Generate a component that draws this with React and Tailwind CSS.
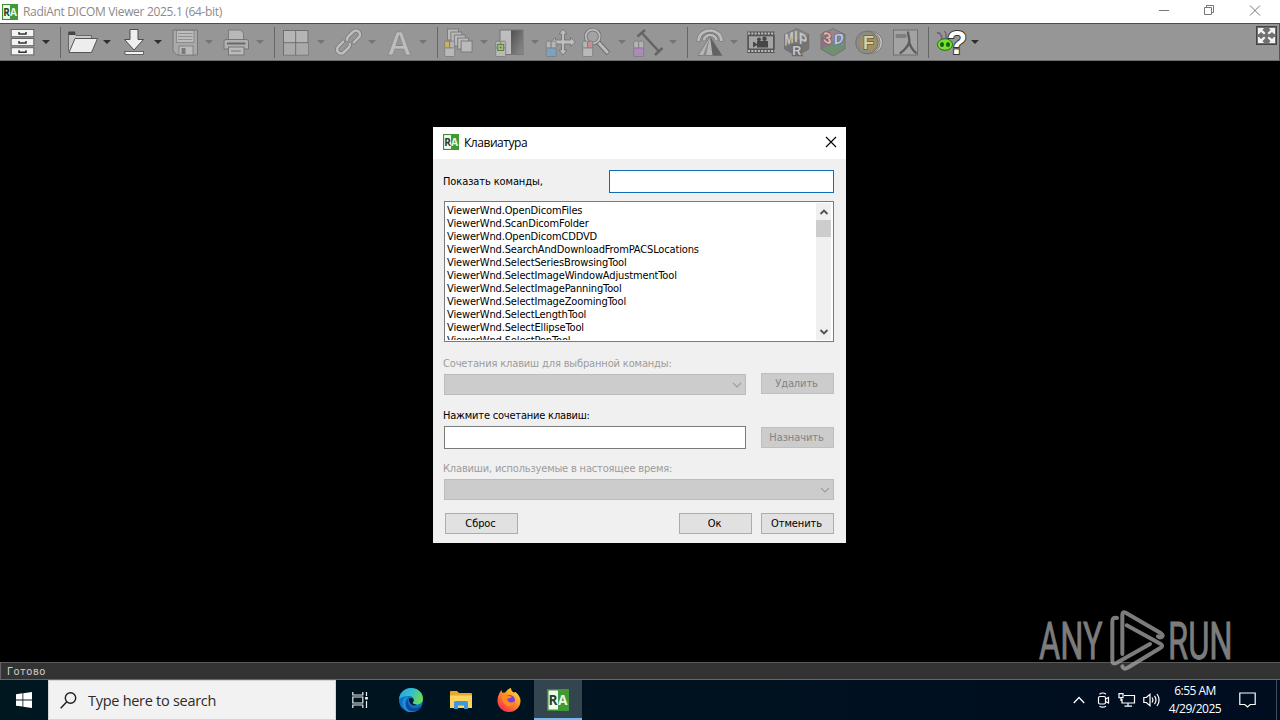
import React from "react";

const commands = [
  "OpenDicomFiles",
  "ScanDicomFolder",
  "OpenDicomCDDVD",
  "SearchAndDownloadFromPACSLocations",
  "SelectSeriesBrowsingTool",
  "SelectImageWindowAdjustmentTool",
  "SelectImagePanningTool",
  "SelectImageZoomingTool",
  "SelectLengthTool",
  "SelectEllipseTool",
  "SelectPenTool",
];

const RaLogo = ({ className }) => (
  <svg className={className} viewBox="0 0 22 22">
    <rect x="0.75" y="0.75" width="20.5" height="20.5" fill="#f3fbef" stroke="#3d8c34" strokeWidth="1.5" />
    <rect x="11" y="0" width="11" height="22" fill="#3f9a35" />
    <text x="1.6" y="16" fontSize="14.5" fontWeight="bold" fontFamily="Open Sans, sans-serif" fill="#27402a" textLength="9" lengthAdjust="spacingAndGlyphs">R</text>
    <text x="11" y="16" fontSize="14.5" fontWeight="bold" fontFamily="Open Sans, sans-serif" fill="#eaf7e6" textLength="9.5" lengthAdjust="spacingAndGlyphs">A</text>
  </svg>
);

// small mouse drawn in the corner of the tool icons
const Mouse = ({ left = "#b4b4b4", right = "#b4b4b4", body = "#b9b9b9" }) => (
  <g stroke="#7b7b7b" strokeWidth="0.8">
    <rect x="0.7" y="15.2" width="5" height="7" rx="1" fill={left} />
    <rect x="5.7" y="15.2" width="5" height="7" rx="1" fill={right} />
    <rect x="0.7" y="22" width="10" height="8.5" rx="1" fill={body} />
  </g>
);

const Arrow = ({ active }) => (
  <svg className="ml-1 h-2 w-2" viewBox="0 0 8 8">
    <path d="M0 2h8L4 6z" fill={active ? "#2e2e2e" : "#757575"} />
  </svg>
);

const Tool = ({ children, arrow, active }) => (
  <div className={`flex shrink-0 items-center ${arrow ? "w-[51px]" : "w-9"}`}>
    <svg className="h-8 w-8 shrink-0 overflow-visible" viewBox="0 0 32 32" fill="none">
      {children}
    </svg>
    {arrow && <Arrow active={active} />}
  </div>
);

const Separator = () => <div className="mr-1.5 ml-[3px] h-[31px] w-px shrink-0 bg-[#666]" />;

const Toolbar = () => (
  <div className="flex h-[38px] items-center border-t border-r border-b border-t-[#4e4e4e] border-r-[#555] border-b-[#6f6f6f] bg-[#969696] pl-1.5">
    <Tool arrow active>
      {[3.5, 12.5, 21.7].map((y) => (
        <g key={y}>
          <rect x="5.2" y={y} width="22.6" height="7.2" fill="#f4f4f4" stroke="#666" />
          <path d={`M13 ${y + 2.6}v2h7v-2`} stroke="#333" strokeWidth="1.5" />
        </g>
      ))}
    </Tool>
    <Separator />
    <Tool arrow active>
      <path d="M1.5 25.5V6.5h6.5l1 3h15.5v5" fill="#c9c9c9" stroke="#666" />
      <path d="M1.5 5.5H8V9H1.5z" fill="#444" />
      <path d="M8 12.5h22.5L24.5 26.5H2z" fill="#ededed" stroke="#555" />
    </Tool>
    <Tool arrow active>
      <path d="M12 3.5h8v10h5.5L16 24 6.5 13.5H12z" fill="#efefef" stroke="#4c4c4c" />
      <rect x="7" y="25.5" width="18.5" height="3" fill="#f4f4f4" stroke="#4c4c4c" strokeWidth="0.8" />
    </Tool>
    <Tool arrow>
      <path d="M4 4h24.5v25H8l-4-4z" fill="#a9a9a9" stroke="#777" />
      <rect x="7.5" y="4.5" width="17.5" height="12" fill="#bcbcbc" stroke="#808080" strokeWidth="0.8" />
      <path d="M9 7.5h14.5M9 10.5h14.5M9 13.5h14.5" stroke="#929292" />
      <rect x="10" y="20" width="14" height="9" fill="#bababa" stroke="#7b7b7b" strokeWidth="0.8" />
      <rect x="12.5" y="22" width="4" height="6" fill="#7a7a7a" />
    </Tool>
    <Tool arrow>
      <path d="M8.5 14V4h12l3 3v7z" fill="#b8b8b8" stroke="#7b7b7b" />
      <path d="M4 15.5q0-2 2-2h20.500q2 0 2 2V23H4z" fill="#b0b0b0" stroke="#747474" />
      <path d="M7 17.500h18.500" stroke="#696969" strokeWidth="2" />
      <rect x="8.500" y="21" width="15.500" height="8" fill="#bababa" stroke="#747474" />
      <path d="M11 25h10" stroke="#747474" />
    </Tool>
    <Separator />
    <Tool arrow>
      <rect x="2.500" y="4.500" width="24.500" height="24.500" fill="#b5b5b5" stroke="#6e6e6e" />
      <path d="M3 17h24v11.500H3z" fill="#aaa" />
      <path d="M14.700 4.500V29M2.500 16.700H27" stroke="#6e6e6e" />
    </Tool>
    <Tool arrow>
      <g transform="rotate(-45 16.500 16)" strokeLinecap="round">
        <path d="M13 12H6a4 4 0 0 0 0 8h7a4 4 0 0 0 3-1.500M20 20h7a4 4 0 0 0 0-8h-7a4 4 0 0 0-3 1.500" stroke="#777" strokeWidth="4" />
        <path d="M13 12H6a4 4 0 0 0 0 8h7a4 4 0 0 0 3-1.500M20 20h7a4 4 0 0 0 0-8h-7a4 4 0 0 0-3 1.500" stroke="#bebebe" strokeWidth="2.600" />
      </g>
    </Tool>
    <Tool arrow>
      <text x="4" y="28.500" fontSize="34" fontWeight="bold" fontFamily="Liberation Sans, sans-serif" fill="#bdbdbd" stroke="#808080" strokeWidth="0.700">A</text>
    </Tool>
    <Separator />
    <Tool arrow>
      {[0, 1, 2, 3, 4].map((i) => (
        <rect key={i} x={3.500 + i * 3.400} y={3 + i * 3} width="11" height="11" fill="#bababa" stroke="#7b7b7b" />
      ))}
      <Mouse left="#c6b663" />
    </Tool>
    <Tool arrow>
      <defs>
        <linearGradient id="ramp" x1="0" y1="0" x2="1" y2="1">
          <stop offset="0" stopColor="#505050" />
          <stop offset="1" stopColor="#8d8d8d" />
        </linearGradient>
      </defs>
      <rect x="5" y="4" width="11" height="24.500" fill="#bdbdbd" />
      <rect x="16" y="4" width="12" height="24.500" fill="url(#ramp)" />
      <rect x="5" y="4" width="23" height="24.500" stroke="#777" />
      <Mouse />
      <rect x="2.700" y="18.500" width="6" height="6" fill="#a8b98c" stroke="#5c8139" />
      <rect x="4.900" y="20.700" width="1.600" height="1.600" fill="#4d7330" />
    </Tool>
    <div className="-ml-0.5 flex">
      <Tool>
        <g transform="translate(2 0)">
          <path d="M17 3l4 5h-2.500v6h6v-2.500l5 4.500-5 4.500V18h-6v6H21l-4 5-4-5h2.500v-6h-6v2.500L4.500 16l5-4.500V14h6V8H13z" fill="#bebebe" stroke="#757575" strokeWidth="0.900" />
        </g>
        <g transform="translate(1.500 0)">
          <Mouse body="#7ba3bd" />
        </g>
      </Tool>
    </div>
    <div className="ml-0.5 flex">
      <Tool arrow>
        <path d="M15.500 15.500L26.500 27.500" stroke="#6e6e6e" strokeWidth="5" />
        <path d="M15.500 15.500L26 27" stroke="#bcbcbc" strokeWidth="3" />
        <circle cx="10.700" cy="10.500" r="7" fill="#a3a3a3" stroke="#6e6e6e" strokeWidth="3.500" />
        <circle cx="10.700" cy="10.500" r="7" stroke="#bcbcbc" strokeWidth="1.900" />
        <Mouse right="#c88e95" />
      </Tool>
    </div>
    <Tool arrow>
      <path d="M8.500 6.500L25.500 25M4.500 10.500l7.500-6.500M22 29l7.500-7" stroke="#646464" strokeWidth="2.400" />
      <Mouse body="#ae89bc" />
    </Tool>
    <Separator />
    <Tool arrow>
      <g strokeWidth="4" stroke="#777">
        <path d="M4.500 15.500a11.500 11 0 0 1 23 0M10 15a6.200 6 0 0 1 12.400 0" />
      </g>
      <g strokeWidth="2.600" stroke="#bcbcbc">
        <path d="M4.500 15a11.500 10.500 0 0 1 23 0M10 14.500a6.200 5.500 0 0 1 12.400 0" />
      </g>
      <path d="M16 10.500L28 29.500H4z" fill="#b6b6b6" stroke="#777" strokeWidth="0.800" />
      <path d="M16 10.500l2.500 19H28z" fill="#626262" />
      <path d="M16 10.500L12 29.500h-3z" fill="#8a8a8a" />
    </Tool>
    <Tool>
      <rect x="2.300" y="5.500" width="27.500" height="21.500" fill="#555" />
      <path d="M3 7.500h27M3 25h27" stroke="#bdbdbd" strokeWidth="2" strokeDasharray="2 1.300" />
      <rect x="4" y="10.300" width="24" height="12.200" fill="#a5a5a5" />
      <path d="M12 15h11v6.500H12zM12 18l-4-2.500v6l4-2.500z" fill="#474747" />
      <circle cx="14" cy="13.300" r="1.900" fill="#474747" />
      <circle cx="19.500" cy="12.800" r="2.200" fill="#474747" />
    </Tool>
    <Tool>
      <path d="M15.700 2.500l12 6v14.500l-12 7-12-7V8.500z" fill="#757575" stroke="#6e6e6e" />
      <path d="M15.700 2.500l12 6-12 6-12-6z" fill="#858585" />
      <g fontFamily="Liberation Sans, sans-serif" fontWeight="bold" fill="#c6c6c6">
        <text fontSize="12" transform="matrix(.9 -.35 0 1.350 3.500 20)">M</text>
        <text fontSize="12" transform="matrix(1 .400 0 1.350 13.200 15.500)">I</text>
        <text fontSize="12" transform="matrix(1 .500 0 1.350 18 17)">P</text>
        <text x="11.300" y="28.500" fontSize="12.500" stroke="#6a6a6a" strokeWidth="2.500" paintOrder="stroke">R</text>
      </g>
    </Tool>
    <Tool>
      <path d="M4 8.500L16 15v15L4 23z" fill="#80798e" />
      <path d="M28 8.500L16 15v15l12-7z" fill="#728f7a" />
      <path d="M16 2.500l12 6-12 6.500-12-6.500z" fill="#9b8585" />
      <path d="M16 17l11.500 6L16 29.700 4.500 23z" fill="#71906f" />
      <path d="M4 10l12 6-11.500 7z" fill="#8a7486" />
      <path d="M16 2.500l12 6V23l-12 7-12-7V8.500z" stroke="#737373" />
      <g fontFamily="Liberation Sans, sans-serif" fontWeight="bold" strokeWidth="1.800" paintOrder="stroke">
        <text fontSize="15.500" fill="#d3b9b9" stroke="#8b5c60" transform="matrix(1 .300 0 1 6 16)">3</text>
        <text fontSize="14" fill="#bcc7dd" stroke="#65709a" transform="matrix(.95 -.300 0 1 17 19)">D</text>
      </g>
    </Tool>
    <Tool>
      <circle cx="18.500" cy="16.500" r="11" fill="#c4c4c4" stroke="#7b7b7b" />
      <circle cx="15.500" cy="16.500" r="11.500" fill="#c0bda9" stroke="#858069" />
      <circle cx="14" cy="16.500" r="11.300" fill="#8b8b88" stroke="#737373" />
      <circle cx="15.500" cy="16.500" r="8.500" fill="#a58f60" />
      <text x="10" y="23" fontSize="18" fontWeight="bold" fontFamily="Liberation Sans, sans-serif" fill="#d6cda2" stroke="#6c6040" strokeWidth="1.500" paintOrder="stroke">F</text>
    </Tool>
    <Tool>
      <rect x="4.500" y="4" width="24" height="25" fill="#a3a3a3" stroke="#707070" />
      <rect x="6.500" y="8" width="11" height="4" rx="1.500" fill="#7f7f7f" />
      <path d="M19 5.500c0 5 1.800 7 1.300 10s-4 8-9.500 12M20 15.500c1 5 3 8 7.500 12" stroke="#5c5c5c" strokeWidth="2.300" />
    </Tool>
    <Separator />
    <Tool arrow active>
      <path d="M7 13q-1-7-5-6M11 13q1-6-2-8" stroke="#785c82" strokeWidth="1.500" />
      <text x="12" y="28" fontSize="33" fontWeight="bold" fontFamily="Liberation Sans, sans-serif" fill="#fff" stroke="#333" strokeWidth="2" paintOrder="stroke">?</text>
      <ellipse cx="10" cy="18.500" rx="7.500" ry="5.800" fill="#6fe42b" stroke="#27691a" />
      <ellipse cx="7" cy="18.500" rx="2" ry="2.600" fill="#20571b" />
      <ellipse cx="13" cy="18.500" rx="2" ry="2.600" fill="#20571b" />
    </Tool>
    <div className="mr-0.5 mb-3.5 ml-auto flex h-[19px] w-[21px] items-center justify-center border border-[#444] bg-[#707070]">
      <svg className="h-[17px] w-[19px]" viewBox="0 0 19 17" fill="#f2f2f2">
        <path d="M1 1h6L5.500 3 8.500 6 7 7.500 4 5 2 7H1zM18 1h-6l1.500 2-3 3L12 7.500 15 5l2 2h1zM1 16h6l-1.500-2 3-3L7 9.500 4 12l-2-2H1zM18 16h-6l1.500-2-3-3L12 9.500l3 2.500 2-2h1z" />
      </svg>
    </div>
  </div>
);

const Combo = ({ className }) => (
  <div className={`flex h-[21px] items-center justify-end border border-[#bcbcbc] bg-[#ccc] pr-[3px] ${className}`}>
    <svg className="h-2.5 w-2.5" viewBox="0 0 10 10" fill="none" stroke="#9f9f9f" strokeWidth="1.200">
      <path d="M1 3l4 4 4-4" />
    </svg>
  </div>
);

const Button = ({ children, disabled }) => (
  <button
    disabled={disabled}
    className={`flex h-[21px] w-[73px] items-center justify-center border pt-px pr-0.5 tracking-[-0.1px] ${
      disabled ? "border-[#bfbfbf] bg-[#ccc] text-[#838383]" : "border-[#adadad] bg-[#e1e1e1] text-black"
    }`}
  >
    {children}
  </button>
);

const KeyboardDialog = () => (
  <div className="h-[416px] w-[413px] bg-[#f0f0f0] font-['DejaVu_Sans_Condensed','DejaVu_Sans',sans-serif] text-[11px] leading-[14px] tracking-[-0.2px] text-black">
    <div className="flex h-8 items-center bg-white pr-[9px] pl-2.5">
      <RaLogo className="mb-0.5 h-4 w-4" />
      <p className="ml-[5px] font-['Open_Sans',sans-serif] text-xs tracking-[-0.45px]">Клавиатура</p>
      <svg className="mb-0.5 ml-auto h-3 w-3" viewBox="0 0 12 12" stroke="#000" strokeWidth="1.100">
        <path d="M1 1l10 10M11 1L1 11" />
      </svg>
    </div>
    <div className="pt-[11px] pr-3 pl-[11px]">
      <div className="flex items-center justify-between">
        <label className="-ml-px tracking-[-0.1px]">Показать команды,</label>
        <input className="h-[23px] w-[225px] border border-[#0f6db8] bg-white" />
      </div>
      <div className="mt-2 flex h-[141px] justify-between border border-[#7a7a7a] bg-white p-px">
        <ul className="overflow-hidden pt-px pl-px leading-[13px] tracking-[-0.14px]">
          {commands.map((name) => (
            <li key={name}>ViewerWnd.{name}</li>
          ))}
        </ul>
        <div className="mr-px flex w-[15px] flex-col items-center bg-[#f0f0f0] py-[5px]">
          <svg className="h-2 w-2.5 shrink-0" viewBox="0 0 10 8" fill="none" stroke="#505050" strokeWidth="1.800">
            <path d="M1.500 6L5 2.500 8.500 6" />
          </svg>
          <div className="mt-1 h-[17px] w-[15px] bg-[#cdcdcd]" />
          <svg className="mt-auto -mb-px h-2 w-2.5 shrink-0" viewBox="0 0 10 8" fill="none" stroke="#505050" strokeWidth="1.800">
            <path d="M1.500 2L5 5.500 8.500 2" />
          </svg>
        </div>
      </div>
      <p className="mt-[15px] -ml-px tracking-[-0.15px] text-[#9c9c9c]">Сочетания клавиш для выбранной команды:</p>
      <div className="mt-0.5 flex justify-between">
        <Combo className="mt-px w-[302px]" />
        <Button disabled>Удалить</Button>
      </div>
      <p className="mt-3.5 -ml-px">Нажмите сочетание клавиш:</p>
      <div className="mt-[3px] flex items-center justify-between">
        <input className="h-[23px] w-[302px] border border-[#7a7a7a] bg-white" />
        <Button disabled>Назначить</Button>
      </div>
      <p className="mt-[13px] -ml-px tracking-[-0.17px] text-[#9c9c9c]">Клавиши, используемые в настоящее время:</p>
      <Combo className="mt-[3px]" />
      <div className="mt-[13px] flex pl-px">
        <Button>Сброс</Button>
        <div className="ml-auto flex gap-[9px]">
          <Button>Ок</Button>
          <Button>Отменить</Button>
        </div>
      </div>
    </div>
  </div>
);

const Watermark = () => (
  <svg className="absolute top-[604px] left-[1035px] h-[72px] w-[200px]" viewBox="0 0 600 216" fill="none" opacity="0.75">
    <g fontFamily="Roboto, sans-serif" fontSize="154" fill="#a6a6a6" stroke="#a6a6a6" strokeWidth="2.500">
      <text x="12" y="165" textLength="191" lengthAdjust="spacingAndGlyphs">ANY</text>
      <text x="399" y="165" textLength="194" lengthAdjust="spacingAndGlyphs">RUN</text>
    </g>
    <g transform="translate(180 0)" stroke="#a6a6a6" strokeWidth="12" strokeLinecap="round" strokeLinejoin="round">
      <path d="M82 150V33q0-12 10-7l106 62q9 6 2 11-6 3-11-2" />
      <path d="M66 42q-13-4-14 10v119q1 11 12 6l101-57" />
      <path d="M95 64l101 55q10 6 1 12L98 191q-12 8-16-4" />
    </g>
  </svg>
);

const Taskbar = () => (
  <div className="flex h-10 items-center bg-linear-to-r from-[#001720] to-[#000d20] font-['Open_Sans','Noto_Sans',sans-serif] text-white">
    <div className="flex w-12 justify-center">
      <svg className="h-4 w-4" viewBox="0 0 16 16" fill="#fff">
        <path d="M0 2.200L6.500 1.300v6.200H0zM7.300 1.200L16 0v7.500H7.300zM0 8.400h6.500v6.200L0 13.700zM7.300 8.400H16V16l-8.700-1.200z" />
      </svg>
    </div>
    <div className="flex h-10 w-72 items-center border border-[#d5d5d5] bg-[#f2f2f2] pl-[11px] text-[#2b2b2b]">
      <svg className="h-[17px] w-[17px]" viewBox="0 0 17 17" fill="none" stroke="#1e1e1e" strokeWidth="1.400">
        <circle cx="10.500" cy="6" r="5.200" />
        <path d="M6.800 9.700L.7 16.200" />
      </svg>
      <p className="mt-0.5 ml-[11px] text-[14.5px] tracking-[-0.28px]">Type here to search</p>
    </div>
    <div className="flex w-12 justify-center">
      <svg className="h-4 w-4" viewBox="0 0 16 16" fill="none" stroke="#e8eef0" strokeWidth="1.200">
        <path d="M.8 0v3h10V0M.8 16v-3h10v3M.8 5h10v6H.8zM14.500 0v4M14.500 9v7" />
        <path d="M13.200 5h2.600v2.500h-2.600z" fill="#fff" stroke="none" />
      </svg>
    </div>
    <div className="flex w-[54px] justify-center">
      <svg className="h-6 w-6" viewBox="0 0 24 24">
        <defs>
          <linearGradient id="edgeTop" x1="0" y1="0" x2="1" y2="0.400">
            <stop offset="0" stopColor="#219fde" />
            <stop offset="0.550" stopColor="#35c1c9" />
            <stop offset="1" stopColor="#68d95b" />
          </linearGradient>
        </defs>
        <circle cx="12" cy="12" r="12" fill="#0f71c6" />
        <path d="M0 11C1 4 6 0 12 0c7 0 12 5 12 10.500 0 4-3 6-6.500 6-3 0-4.200-1.300-3.500-2.300 2-2.500.5-6.200-4-6.200C6 8 2 9 0 11z" fill="url(#edgeTop)" />
        <path d="M9.500 9C6 11 5.500 16 9 20c3 3 8 3.500 12 0-3 4-8 5-12.500 3.400C3.500 21 2 14 5 10.500 6.500 9 8 8.500 9.500 9z" fill="#1b8edc" />
        <path d="M9.700 10.500c-2 3-.7 7.500 3.300 9 3 1.100 6.500.5 9-1.500l1 .3c-2.500 4.700-8 6.400-12.500 4.400-5-3-5-9.500-.8-12.200z" fill="#0b4b9a" />
        <path d="M9.800 11c.8-1.500 3.500-1.400 4.700.3.500 1 .2 2-.6 3-.7 1 .5 2.200 3.600 2.200-2.500 2-7 .8-7.700-5.500z" fill="#04202f" />
      </svg>
    </div>
    <div className="flex w-[45px] justify-center">
      <svg className="h-[18px] w-[22px]" viewBox="0 0 22 18">
        <path d="M0 1q0-1 1-1h6l2 2h12q1 0 1 1v14H0z" fill="#e9a825" />
        <path d="M0 4.500h22V17H0z" fill="#fcd462" />
        <path d="M4 17v-5.500q0-1.500 1.500-1.500h11q1.500 0 1.500 1.500V18h-4v-3.500H8V18H4z" fill="#4098d8" />
      </svg>
    </div>
    <div className="flex w-[51px] justify-center">
      <svg className="h-6 w-6" viewBox="0 0 24 24">
        <defs>
          <linearGradient id="fox" x1="1" y1="0" x2="0.200" y2="1">
            <stop offset="0" stopColor="#fff044" />
            <stop offset="0.450" stopColor="#ff9a22" />
            <stop offset="1" stopColor="#f5254f" />
          </linearGradient>
        </defs>
        <path d="M2.500 5L4.500 2l.7 2.800 3-.3Q11 .5 14 0q0 3 3 4.500L18.500 4Q23.500 8 23.500 13c0 6-5 11-11.500 11S.5 19 .5 13q0-5 2-8z" fill="url(#fox)" />
        <circle cx="12.500" cy="12.500" r="5.500" fill="#7542d7" />
        <path d="M5 9q3-3 7-1l3 .5q-1 2-4.500 2-1 3 3.500 4 3 .2 4-2-.5 6-6.500 6Q5.500 17 5 9z" fill="#ff8a20" />
      </svg>
    </div>
    <div className="flex h-10 w-12 items-center justify-center border-b-2 border-[#76b9ed] bg-[#33464f] pt-0.5">
      <RaLogo className="h-[22px] w-[22px]" />
    </div>
    <div className="ml-auto flex items-center">
      <svg className="h-3 w-3" viewBox="0 0 12 12" fill="none" stroke="#fff" strokeWidth="1.300">
        <path d="M.8 9L6 3.500 11.200 9" />
      </svg>
      <svg className="ml-3 h-4 w-[13px]" viewBox="0 0 13 16" fill="none" stroke="#fff" strokeWidth="1.200">
        <rect x="1.500" y="4.500" width="7" height="7.500" rx="1.500" />
        <path d="M8.500 7l3-1.500v5.500l-3-1.500M2.500 2.200Q5.500-.2 9 2.200M2.500 14.200q3 2 6.500 0" />
      </svg>
      <svg className="ml-2 h-4 w-[18px]" viewBox="0 0 18 16" fill="none" stroke="#fff" strokeWidth="1.200">
        <path d="M6 3.500h10.500v7.500H4V7M10 11v3M6.500 14.200h7.500M1 1.600h4v4H1zM3 5.500V9" />
      </svg>
      <svg className="ml-[7px] h-4 w-[17px]" viewBox="0 0 17 16" fill="none" stroke="#fff" strokeWidth="1.200">
        <path d="M.8 5.500h2.500L7 2.300v11.400l-3.700-3.200H.8zM9 5.500q1.800 2.500 0 5M11.500 3.800q3 4.200 0 8.400M14 2q4.200 6 0 12" />
      </svg>
      <div className="ml-2 flex w-[54px] flex-col items-center text-xs leading-[18px] tracking-[-0.5px] whitespace-nowrap">
        <span>6:55 AM</span>
        <span>4/29/2025</span>
      </div>
      <svg className="mr-5 ml-[17px] h-4 w-[17px]" viewBox="0 0 17 16" fill="none" stroke="#fff" strokeWidth="1.200">
        <path d="M.8 1h15.400v11.500h-5L8.500 15l-2.700-2.500h-5z" />
      </svg>
      <div className="mr-[3px] h-10 w-px bg-[#3c4b57]" />
    </div>
  </div>
);

const App = () => {
  return (
    <div className="relative flex h-[720px] w-[1280px] flex-col overflow-hidden bg-black">
      <div className="flex h-[23px] items-center bg-white pl-0.5">
        <RaLogo className="h-4 w-4" />
        <p className="ml-[5px] font-['Open_Sans',sans-serif] text-xs tracking-[-0.32px] text-[#8a8a8a]">RadiAnt DICOM Viewer 2025.1 (64-bit)</p>
        <svg className="mr-[19px] mb-[3px] ml-auto h-3 w-[103px]" viewBox="0 0 103 12" fill="none" stroke="#777">
          <path d="M1 6.500h10M46.500 3.500h7v7h-7zM48.500 3.500v-2h7v7h-2M92 1.500l10 10M102 1.500l-10 10" />
        </svg>
      </div>
      <Toolbar />
      <div className="flex flex-1 justify-center pt-[66px] pr-px">
        <KeyboardDialog />
      </div>
      <div className="flex h-[18px] items-center border-t border-b border-l border-t-[#5a5a5a] border-b-[#666] border-l-[#666] bg-[#333] pl-1.5 font-['DejaVu_Sans_Condensed','DejaVu_Sans',sans-serif] text-[11px] leading-none tracking-[0.5px] text-[#cfcfcf]">
        Готово
      </div>
      <Taskbar />
      <Watermark />
    </div>
  );
};

export default App;
